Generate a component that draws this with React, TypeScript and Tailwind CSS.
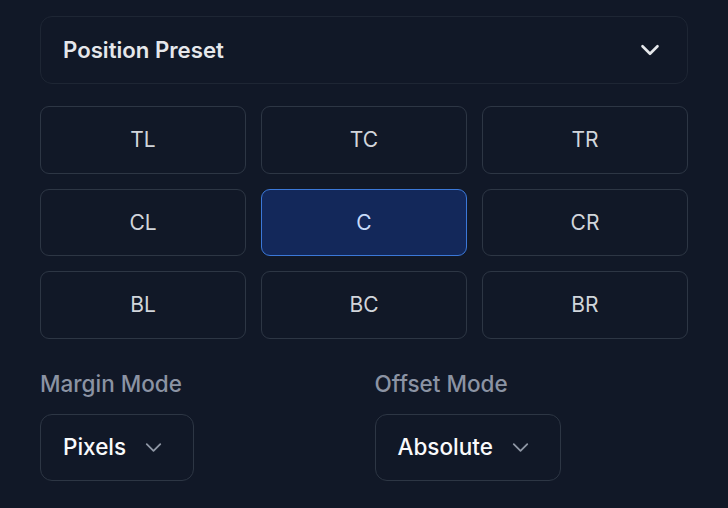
import React from "react";

const cells = ["TL", "TC", "TR", "CL", "C", "CR", "BL", "BC", "BR"];

function Chevron({ className, strokeWidth = 2 }: { className?: string; strokeWidth?: number }) {
  return (
    <svg className={className} viewBox="0 0 24 24" fill="none" stroke="currentColor" strokeWidth={strokeWidth} strokeLinecap="round" strokeLinejoin="round">
      <path d="m6 9 6 6 6-6" />
    </svg>
  );
}

function Select({ label, value }: { label: string; value: string }) {
  return (
    <div className="flex flex-col items-start">
      <div className="text-[22.5px] leading-[30px] font-medium text-[#8b93a3]">{label}</div>
      <div className="mt-[15px] h-[67px] flex items-center gap-[14px] pl-[22px] pr-[26px] rounded-[12px] border border-[#2d3644] bg-[#111827]">
        <span className="text-[22.5px] font-medium text-[#f9fafb]">{value}</span>
        <Chevron className="w-[27px] h-[27px] text-[#8f97a5]" strokeWidth={1.6} />
      </div>
    </div>
  );
}

export default function App() {
  return (
    <div className="w-[728px] h-[508px] bg-[#111827] px-[40px] pt-[16px]" style={{ fontFamily: "Inter, 'Noto Sans', sans-serif" }}>
      <div className="h-[68px] flex items-center justify-between pl-[22px] pr-[22px] rounded-[12px] border border-[#1e2634] bg-[#111827]">
        <span className="text-[22.2px] font-semibold text-[#e5e7eb]">Position Preset</span>
        <Chevron className="w-[30px] h-[30px] text-[#e5e7eb]" strokeWidth={2.1} />
      </div>
      <div className="mt-[22px] grid grid-cols-3 gap-[15px]">
        {cells.map((c) => {
          const sel = c === "C";
          return (
            <div
              key={c}
              className={
                sel
                  ? "h-[67.5px] flex items-center justify-center rounded-[9px] border border-[#3b78d8] bg-[#13285a] text-[21px] text-[#c7dbfb]"
                  : "h-[67.5px] flex items-center justify-center rounded-[9px] border border-[#2d3644] bg-[#111827] text-[21px] text-[#d1d5db]"
              }
            >
              {c}
            </div>
          );
        })}
      </div>
      <div className="mt-[30px] grid grid-cols-2 gap-x-[21px]">
        <Select label="Margin Mode" value="Pixels" />
        <Select label="Offset Mode" value="Absolute" />
      </div>
    </div>
  );
}
